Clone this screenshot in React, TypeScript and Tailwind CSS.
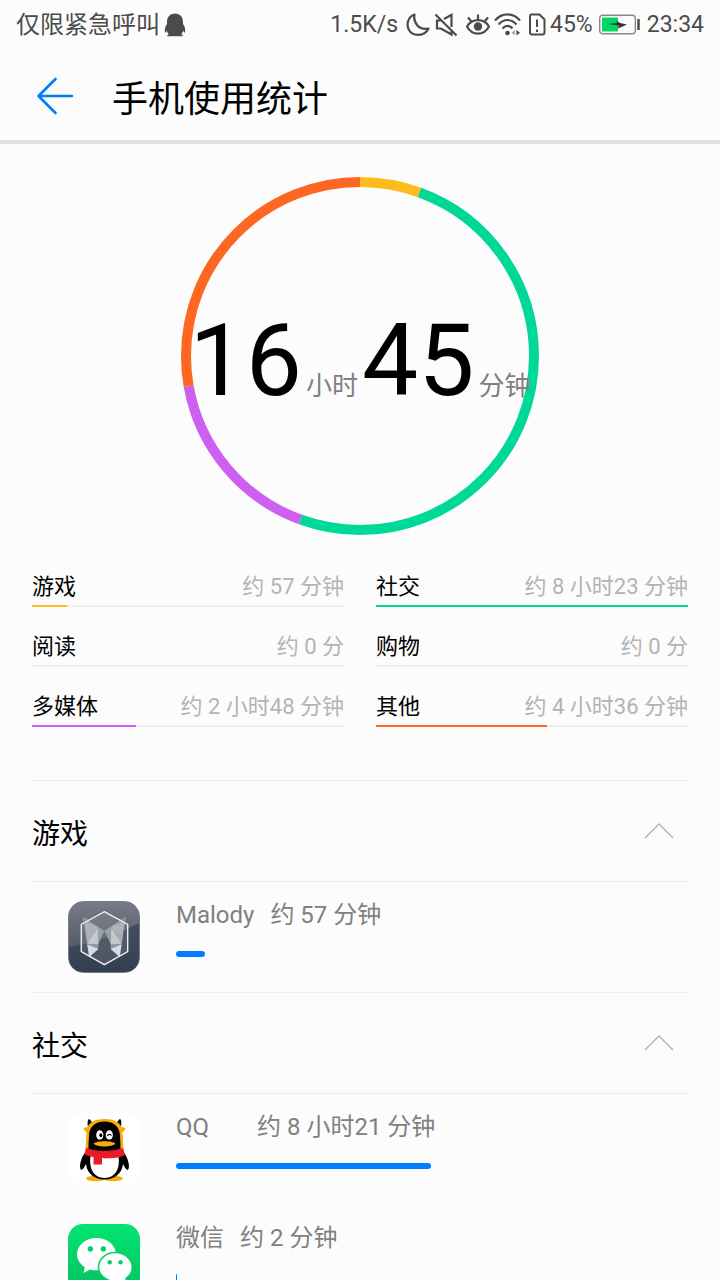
import type { ReactNode } from 'react';

type Category = { name: string; time: string; percent: number; color: string };
type AppUsage = { name: string; time: string; gap: string; percent: number; icon: ReactNode };
type Group = { title: string; apps: AppUsage[] };

const categories: Category[] = [
  { name: '游戏', time: '约 57 分钟', percent: 11.3, color: 'bg-[#ffbb1c]' },
  { name: '社交', time: '约 8 小时23 分钟', percent: 100, color: 'bg-[#00d898]' },
  { name: '阅读', time: '约 0 分', percent: 0, color: 'bg-transparent' },
  { name: '购物', time: '约 0 分', percent: 0, color: 'bg-transparent' },
  { name: '多媒体', time: '约 2 小时48 分钟', percent: 33.4, color: 'bg-[#cd60ee]' },
  { name: '其他', time: '约 4 小时36 分钟', percent: 54.9, color: 'bg-[#fd6721]' },
];

const segments = [
  { degrees: 20, color: '#ffbb1c' },
  { degrees: 180, color: '#00d898' },
  { degrees: 60, color: '#cd60ee' },
  { degrees: 100, color: '#fd6721' },
];

function MalodyIcon() {
  return (
    <svg viewBox="0 0 72 72" className="size-18 shrink-0" aria-hidden="true">
      <defs>
        <linearGradient id="malody-bg" x1="0" y1="0" x2="0" y2="1">
          <stop offset="0" stopColor="#777b85" />
          <stop offset="1" stopColor="#3f4a5b" />
        </linearGradient>
      </defs>
      <rect x="0.5" y="0.5" width="71" height="71" rx="15" fill="url(#malody-bg)" stroke="#777c86" />
      <path d="M1 46C24 42 49 34 71 22V57a14 14 0 0 1-14 14H15A14 14 0 0 1 1 57Z" fill="#2b384b" fillOpacity="0.6" />
      <path d="M36.3 10.7 59.7 23.3V50.7L36.3 63.7 13.3 50.7V23.3Z" fill="#a0a6ae" fillOpacity="0.2" />
      <path d="M15 16 36.3 29.7 30.3 43.3V48L21 56Z M57.6 16 36.3 29.7 42.7 43.3V48L52 56Z" fill="#aeb3ba" fillOpacity="0.7" />
      <path d="M16.700 20.700 29.700 25.500 19.300 42.700Z M56.300 20.700 43.300 25.500 53.500 42.700Z" fill="#d5d8db" fillOpacity="0.35" />
      <path d="M29.700 27 30.300 43.300 19.300 42.700Z M43.300 27 42.700 43.300 53.500 42.700Z" fill="#eceef0" fillOpacity="0.55" />
      <path d="M19.300 43.500 30.300 48 21.300 56Z M53.500 43.500 42.700 48 51.500 56Z" fill="#f2f3f4" fillOpacity="0.75" />
      <path d="M15 16 22 19 16 24Z M57.6 16 51 19 57 24Z" fill="#8d9298" />
      <path d="M36.3 10.7 59.7 23.3V50.7L36.3 63.7 13.3 50.7V23.3Z" fill="none" stroke="#eeeff0" strokeWidth="1.4" />
    </svg>
  );
}

function QQIcon() {
  return (
    <svg viewBox="0 0 72 72" className="size-18 shrink-0" aria-hidden="true">
      <rect width="72" height="72" rx="16" fill="#fff" />
      <path d="M20 14C19 9 20 6 21.200 6 23 7 24 9 24.500 12Z M53 14C54 9 53 6 51.800 6 50 7 49 9 48.500 12Z" fill="#111" />
      <ellipse cx="28" cy="65.5" rx="10" ry="2.8" fill="#faab07" />
      <ellipse cx="45" cy="65.5" rx="10" ry="2.8" fill="#faab07" />
      <path d="M18 38C13 45 10.500 53 13 57 15 57 17 53 18 51 19 61 27 66.500 36.500 66.500S54 61 55 51C56 53 58 57 60 57 62.500 53 60 45 55 38Z" fill="#000" />
      <path d="M36.500 6C27 6 22 9.500 19.500 14L15.500 15C16 17.500 17 18.700 18.500 19L17.500 38H55.500L54.500 19C56 18.700 57 17.500 57.500 15L53.500 14C51 9.500 46 6 36.500 6Z" fill="#faab07" />
      <path d="M36.500 8.500C27 8.500 21 14 21 23 20.500 29 20.500 33 20.500 38H52.500C52.500 33 52.500 29 52 23 52 14 46 8.500 36.500 8.500Z" fill="#000" />
      <path d="M23 41H50C53 54 48 65 36.500 65S20 54 23 41Z" fill="#fff" />
      <path d="M18 35C29 39 44 39 55 35L57 42C53 44.500 46 45 44 45 39 45.500 37 45.500 34 45V51.500H25.500V44C22 43.500 18.500 42.500 16.500 41.500Z" fill="#eb1c24" />
      <ellipse cx="31.800" cy="22" rx="3.600" ry="4.700" fill="#fff" />
      <ellipse cx="41.300" cy="22" rx="3.600" ry="4.700" fill="#fff" />
      <ellipse cx="32.800" cy="22.300" rx="1.500" ry="2" fill="#000" />
      <path d="M39.500 23C40 20.800 42.500 20.800 43.500 22.500" fill="none" stroke="#000" strokeWidth="1.300" />
      <path d="M25.500 30.500C29 27.500 44 27.500 47.500 30.500 45 34.500 28 34.500 25.500 30.500Z" fill="#faab07" />
    </svg>
  );
}

function WeChatIcon() {
  return (
    <svg viewBox="0 0 72 72" className="size-18 shrink-0" aria-hidden="true">
      <defs>
        <linearGradient id="wechat-bg" x1="0" y1="0" x2="0" y2="1">
          <stop offset="0" stopColor="#04e472" />
          <stop offset="1" stopColor="#05be61" />
        </linearGradient>
      </defs>
      <rect width="72" height="72" rx="15" fill="url(#wechat-bg)" />
      <path d="M28.500 14C17.500 14 9 21.200 9 30.300 9 35.500 12 40.200 16.800 43.200L15.500 49 22 45.500C36 49 48 41.500 48 30.300 48 21.200 39.500 14 28.500 14Z" fill="#fff" />
      <path d="M47 28.500C56.500 28.500 64.300 35 64.300 43.300 64.300 48 61.800 51.800 58 54.500L58.800 59 54 56.700C42 60 30.500 52.500 30.500 43.300 30.500 35 38 28.500 47 28.500Z" fill="#fff" stroke="#08d36a" strokeWidth="1.600" />
      <circle cx="22.300" cy="25" r="2.700" fill="#06cf68" />
      <circle cx="35.300" cy="25" r="2.700" fill="#06cf68" />
      <circle cx="41.700" cy="38.300" r="2.200" fill="#06cf68" />
      <circle cx="52.500" cy="38.300" r="2.200" fill="#06cf68" />
    </svg>
  );
}

const groups: Group[] = [
  {
    title: '游戏',
    apps: [{ name: 'Malody', time: '约 57 分钟', gap: 'gap-4', percent: 5.9, icon: <MalodyIcon /> }],
  },
  {
    title: '社交',
    apps: [
      { name: 'QQ', time: '约 8 小时21 分钟', gap: 'gap-12', percent: 52, icon: <QQIcon /> },
      { name: '微信', time: '约 2 分钟', gap: 'gap-4', percent: 0.3, icon: <WeChatIcon /> },
    ],
  },
];

function StatusBar() {
  return (
    <div className="flex h-12 shrink-0 items-center justify-between px-4 pt-0.5 text-[#4b4b4b]">
      <div className="flex items-center gap-1 text-2xl">
        <span>仅限紧急呼叫</span>
        <svg viewBox="0 0 22 24" className="h-6 w-[22px]" fill="currentColor" aria-hidden="true">
          <path d="M11 .5C6 .5 3 4 3 9V11C1 13.500.3 17 1 19.500 1.800 19.800 2.300 18.500 2.800 17.700 3.200 19.300 4 20.500 5 21.200 3.500 21.700 3 22 3.500 23.200H18.500C19 22 18.500 21.700 17 21.200 18 20.500 18.800 19.300 19.200 17.700 19.700 18.500 20.200 19.800 21 19.500 21.700 17 21 13.500 19 11V9C19 4 16 .5 11 .5Z" />
        </svg>
      </div>
      <div className="flex items-center text-[23px] leading-8">
        <span>1.5K/s</span>
        <svg viewBox="0 0 24 24" className="ml-2 size-6" fill="none" stroke="currentColor" strokeWidth="2.200" strokeLinejoin="round" aria-hidden="true">
          <path d="M8.500 1.500C1.500 4 .2 12 3 17 6.500 23.500 18.500 24 22.500 15.500 13 17.500 7 10 8.500 1.500Z" />
        </svg>
        <svg viewBox="0 0 24 24" className="ml-1 size-6" fill="none" stroke="currentColor" strokeWidth="2.200" aria-hidden="true">
          <path d="M1.500 1.500 22.500 22.500M6.500 7.500H3V15.500H7L17.500 21.500V18M10 6 17.500 1.800V14" />
        </svg>
        <svg viewBox="0 0 24 24" className="ml-2 size-6" fill="none" stroke="currentColor" strokeWidth="2.200" aria-hidden="true">
          <path d="M1 13.500C6 5 18 5 23 13.500 18 23 6 23 1 13.500ZM12 7V1.500M5.500 8.500 2 4.500M18.500 8.500 22 4.500" />
          <circle cx="12" cy="13.500" r="4.200" fill="currentColor" stroke="none" />
        </svg>
        <svg viewBox="0 0 28 24" className="ml-1 h-6 w-7" fill="none" stroke="currentColor" strokeWidth="2.200" aria-hidden="true">
          <path d="M1 7.500C8-.6 19-.6 26 7.500M4.500 11.500C10 5.500 17 5.500 22.500 11.500M8.500 15.500C12 12 15 12 18.500 15.500" />
          <circle cx="13.500" cy="20" r="2.300" fill="currentColor" stroke="none" />
          <path d="M21 17V22.500L17.500 19.700Z" fill="#aaa" stroke="none" />
          <path d="M22.500 17V22.500L26 19.700Z" fill="currentColor" stroke="none" />
        </svg>
        <svg viewBox="0 0 18 24" className="ml-1.5 h-6 w-[18px]" fill="none" stroke="currentColor" strokeWidth="2" strokeLinejoin="round" aria-hidden="true">
          <path d="M3 1.500H11.500L16.500 6.500V19.500Q16.500 21.500 14.500 21.500H4Q2 21.500 2 19.500V3Q2 1.500 3 1.500ZM9 6.500V14M9 16.500V19" />
        </svg>
        <span className="ml-1">45%</span>
        <svg viewBox="0 0 42 22" className="ml-1.5 mr-1.5 h-[22px] w-[42px]" fill="none" aria-hidden="true">
          <rect x="0.700" y="1.200" width="35.600" height="18.600" rx="3" stroke="#8a8a8a" strokeWidth="1.400" />
          <rect x="3" y="3.500" width="16" height="14" fill="#00d860" />
          <path d="M39.500 5V16" stroke="currentColor" strokeWidth="2.500" />
          <path d="M9 10 18 9 17.500 6.500 21 9 28 10.500 19 14.500 19.500 11.500Z" fill="#333" />
        </svg>
        <span>23:34</span>
      </div>
    </div>
  );
}

function UsageRing() {
  let start = 0;
  const arcs = segments.map((s) => {
    const offset = start;
    start += s.degrees;
    return (
      <circle
        key={s.color}
        cx="179"
        cy="179"
        r="174"
        pathLength="360"
        stroke={s.color}
        strokeDasharray={`${s.degrees} 360`}
        strokeDashoffset={-offset}
      />
    );
  });
  return (
    <div className="mx-auto mt-[33px] grid w-[358px] place-items-center">
      <svg viewBox="0 0 358 358" className="col-start-1 row-start-1 w-full -rotate-90" fill="none" strokeWidth="10" aria-hidden="true">
        {arcs}
      </svg>
      <p className="z-10 col-start-1 row-start-1 flex items-baseline gap-1 pt-[34px] text-[26px] leading-[120px] whitespace-nowrap text-[#808080]">
        <span className="text-[100px] text-black">16</span>
        <span>小时</span>
        <span className="text-[100px] text-black">45</span>
        <span>分钟</span>
      </p>
    </div>
  );
}

function CategoryRow({ name, time, percent, color }: Category) {
  return (
    <li>
      <div className="flex h-[38px] items-center justify-between text-[22px]">
        <span className="text-black">{name}</span>
        <span className="text-[#b3b3b3]">{time}</span>
      </div>
      <div className="h-0.5 bg-[#eeeeee]">
        <div className={`h-full ${color}`} style={{ width: `${percent}%` }} />
      </div>
    </li>
  );
}

function AppRow({ name, time, gap, percent, icon }: AppUsage) {
  return (
    <li className="flex h-[111px] gap-9 pt-[19px] pl-9">
      {icon}
      <div className="min-w-0 flex-1">
        <div className={`flex h-7 items-center text-2xl text-[#808080] ${gap}`}>
          <span>{name}</span>
          <span>{time}</span>
        </div>
        <div className="mt-[22px] pr-[22px]">
          <div className="h-1.5 rounded-full bg-[#007dff]" style={{ width: `${percent}%` }} />
        </div>
      </div>
    </li>
  );
}

export default function App() {
  return (
    <div className="flex h-screen flex-col bg-[#fcfcfc] font-['Roboto','Noto_Sans_CJK_SC',sans-serif]" lang="zh-CN">
      <StatusBar />
      <header className="flex h-24 shrink-0 items-center gap-9 border-b-4 border-[#e1e1e1] px-9 pt-1">
        <button type="button" aria-label="返回" className="text-[#007dff]">
          <svg viewBox="0 0 40 40" className="size-10" fill="none" stroke="currentColor" strokeWidth="2.600" strokeLinecap="round" strokeLinejoin="round">
            <path d="M19.500 3 2.500 20 19.500 37M2.500 20H36" />
          </svg>
        </button>
        <h1 className="pt-2 text-4xl text-black">手机使用统计</h1>
      </header>
      <main className="min-h-0 flex-1 overflow-y-auto [scrollbar-width:none]">
        <UsageRing />
        <ul className="mx-8 mt-8 mb-[53px] grid grid-cols-2 gap-x-8 gap-y-5">
          {categories.map((c) => (
            <CategoryRow key={c.name} {...c} />
          ))}
        </ul>
        {groups.map((g) => (
          <section key={g.title} className="mx-8">
            <button type="button" className="flex h-[102px] w-full items-center justify-between border-y border-[#ececec] pr-3 text-[28px] text-black">
              <span className="pt-2">{g.title}</span>
              <svg viewBox="0 0 34 20" className="h-5 w-[34px]" fill="none" stroke="#b0b0b0" strokeWidth="1.300" aria-hidden="true">
                <path d="M3 17 17 3 31 17" />
              </svg>
            </button>
            <ul className="-mb-px">
              {g.apps.map((a) => (
                <AppRow key={a.name} {...a} />
              ))}
            </ul>
          </section>
        ))}
      </main>
    </div>
  );
}
